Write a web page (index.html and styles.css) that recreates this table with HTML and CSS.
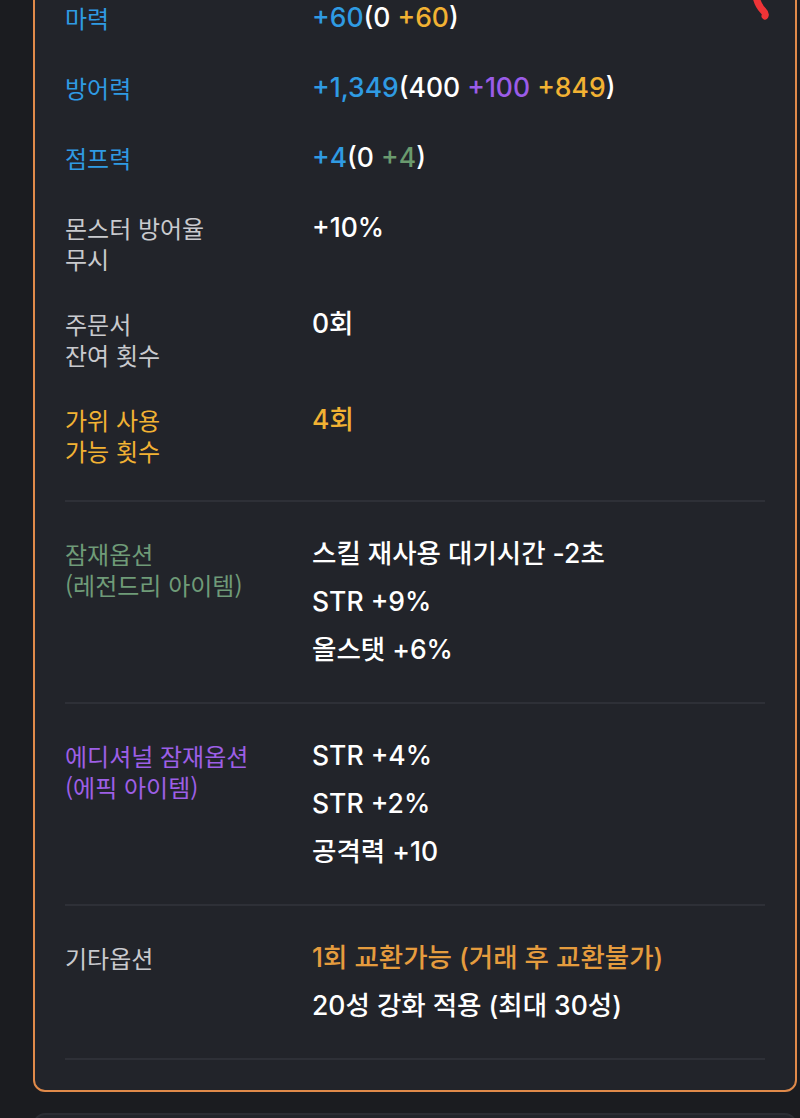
FILE: index.html
```html
<!DOCTYPE html>
<html lang="ko">
<head>
<meta charset="utf-8">
<title>아이템 상세</title>
<link rel="stylesheet" href="styles.css">
</head>
<body>
<div class="page">
  <section class="card card-item">
    <div class="stats">
      <div class="row">
        <div class="label blue">마력</div>
        <div class="value"><span class="blue">+60</span>(0 <span class="yellow">+60</span>)</div>
      </div>
      <div class="row">
        <div class="label blue">방어력</div>
        <div class="value"><span class="blue">+1,349</span>(400 <span class="purple">+100</span> <span class="yellow">+849</span>)</div>
      </div>
      <div class="row">
        <div class="label blue">점프력</div>
        <div class="value"><span class="blue">+4</span>(0 <span class="green">+4</span>)</div>
      </div>
      <div class="row">
        <div class="label gray">몬스터 방어율
무시</div>
        <div class="value">+10%</div>
      </div>
      <div class="row">
        <div class="label gray">주문서
잔여 횟수</div>
        <div class="value">0회</div>
      </div>
      <div class="row">
        <div class="label yellow">가위 사용
가능 횟수</div>
        <div class="value yellow">4회</div>
      </div>
    </div>

    <div class="section">
      <div class="label green-label">잠재옵션
(레전드리 아이템)</div>
      <div class="values">
        <div class="line">스킬 재사용 대기시간 -2초</div>
        <div class="line">STR +9%</div>
        <div class="line">올스탯 +6%</div>
      </div>
    </div>

    <div class="section">
      <div class="label purple-label">에디셔널 잠재옵션
(에픽 아이템)</div>
      <div class="values">
        <div class="line">STR +4%</div>
        <div class="line">STR +2%</div>
        <div class="line">공격력 +10</div>
      </div>
    </div>

    <div class="section">
      <div class="label gray">기타옵션</div>
      <div class="values">
        <div class="line orange">1회 교환가능 (거래 후 교환불가)</div>
        <div class="line">20성 강화 적용 (최대 30성)</div>
      </div>
    </div>
  </section>

  <section class="card card-next"></section>

  <svg class="scribble" width="30" height="26" viewBox="0 0 30 26" aria-hidden="true">
    <path d="M4 -3 C5.5 3 8 7.5 11 10.5 C13 12.5 14 14 13 16" fill="none" stroke="#ee3437" stroke-width="7" stroke-linecap="round"/>
  </svg>
</div>
</body>
</html>
```
FILE: styles.css
```css
html, body {
  margin: 0;
  padding: 0;
  background: #1b1c20;
  height: 100%;
  overflow: hidden;
}

body {
  font-family: Inter, "Noto Sans CJK KR", sans-serif;
  color: #ffffff;
}

.page {
  position: relative;
  display: flow-root;
  padding: 0 3px 0 33px;
}

.card {
  background: #22242a;
  border-radius: 12px;
  box-sizing: border-box;
}

.card-item {
  margin-top: -40px;
  border: 2px solid #e08a4a;
  padding: 40px 30px 30px;
}

.card-next {
  margin-top: 21px;
  border: 2px solid #2b2d33;
  height: 200px;
}

.stats {
  display: flex;
  flex-direction: column;
  gap: 34px;
  padding-bottom: 34px;
  border-bottom: 2px solid #2e3037;
}

.row {
  display: flex;
  align-items: flex-start;
  min-height: 36px;
}

.label {
  width: 247px;
  flex: none;
  font-family: "Noto Sans CJK KR", sans-serif;
  font-size: 24px;
  line-height: 31px;
  font-weight: 400;
  white-space: pre-line;
}

.value,
.line {
  font-size: 26.5px;
  line-height: 31px;
  font-weight: 500;
  color: #ffffff;
  white-space: nowrap;
}

.section {
  display: flex;
  align-items: flex-start;
  padding: 36px 0 37px;
  border-bottom: 2px solid #2e3037;
}

.values {
  display: flex;
  flex-direction: column;
  gap: 17px;
}

.blue { color: #2f9be3; }
.yellow { color: #f2b233; }
.purple { color: #9b5ce8; }
.green { color: #6a9a6e; }
.gray { color: #c9cace; }
.orange { color: #e59c3e; }
.green-label { color: #6f9b78; }
.purple-label { color: #9d5fe6; }

.value.yellow { color: #f2b233; }

.scribble {
  position: absolute;
  top: 0;
  left: 752px;
}
```
